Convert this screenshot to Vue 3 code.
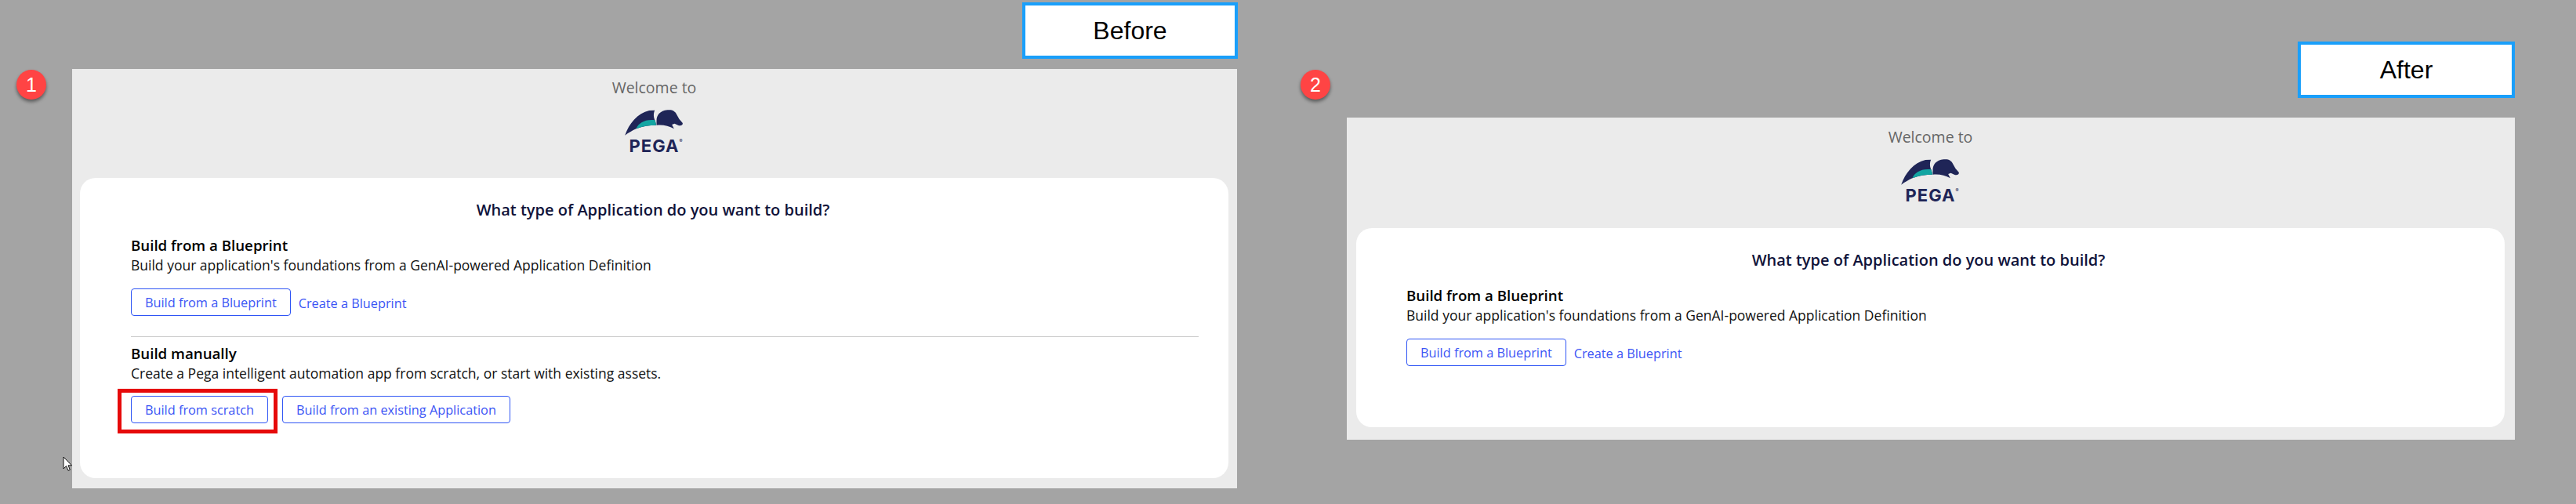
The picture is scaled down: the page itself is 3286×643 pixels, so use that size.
<script setup>
const panels = [
  { id: 'before', manual: true },
  { id: 'after', manual: false },
]
</script>

<template>
  <div class="page">
    <section v-for="p in panels" :key="p.id" class="panel" :class="p.id">
      <header class="head">
        <div class="welcome">Welcome to</div>
        <div class="logo">
          <svg class="mark" viewBox="112 59 224 99" aria-hidden="true">
            <path fill="#1f2557" d="M112 157C128 112 160 72 205 62L226 61C220 75 222 90 228 101L232 118C205 118 180 122 155 132C140 139 125 148 112 157Z" />
            <path fill="#12a5a2" d="M155 132C163 110 190 94 227 99L232 118C205 118 178 122 155 132Z" />
            <path fill="#1f2557" d="M233 101C233 80 246 63 275 60C284 59 293 60 299 64L306 70L320 95L333 110C335 118 325 122 315 118L302 112L292 116L300 132C280 120 255 115 233 118Z" />
          </svg>
          <div class="word">PEGA<sup>®</sup></div>
        </div>
      </header>
      <main class="card">
        <h1 class="title">What type of Application do you want to build?</h1>
        <div class="group">
          <h2>Build from a Blueprint</h2>
          <p>Build your application's foundations from a GenAI-powered Application Definition</p>
          <div class="actions">
            <button class="btn">Build from a Blueprint</button>
            <a class="link">Create a Blueprint</a>
          </div>
        </div>
        <template v-if="p.manual">
          <hr class="rule" />
          <div class="group">
            <h2>Build manually</h2>
            <p>Create a Pega intelligent automation app from scratch, or start with existing assets.</p>
            <div class="actions wide">
              <button class="btn">Build from scratch</button>
              <button class="btn">Build from an existing Application</button>
            </div>
          </div>
        </template>
      </main>
    </section>

    <div class="tag tag-before">Before</div>
    <div class="tag tag-after">After</div>
    <div class="badge badge-1">1</div>
    <div class="badge badge-2">2</div>
    <div class="highlight"></div>
    <svg class="cursor" viewBox="0 0 12 20" width="12" height="20" aria-hidden="true">
      <path d="M1 1V16L4.6 12.6L7 18.4L9.4 17.4L7 11.8H11.5Z" fill="#fff" stroke="#111" stroke-width="1" />
    </svg>
  </div>
</template>

<style scoped>
.page {
  position: relative;
  width: 3286px;
  height: 643px;
  background: #a4a4a4;
  overflow: hidden;
  display: flex;
  align-items: flex-start;
  padding-left: 92px;
  box-sizing: border-box;
  font-family: "Open Sans", "Liberation Sans", sans-serif;
}
.panel {
  background: #ebebeb;
  box-sizing: border-box;
  display: flex;
  flex-direction: column;
}
.before {
  width: 1486px;
  height: 535px;
  margin-top: 88px;
  padding: 0 11px 13px 10px;
}
.after {
  width: 1490px;
  height: 411px;
  margin-top: 150px;
  margin-left: 140px;
  padding: 0 13px 16px 12px;
}
.head {
  height: 139px;
  flex: none;
  display: flex;
  flex-direction: column;
  align-items: center;
  padding-top: 12px;
  box-sizing: border-box;
}
.after .head {
  height: 141px;
  padding-top: 13px;
}
.welcome {
  font-size: 19.5px;
  line-height: 24px;
  color: #666;
}
.logo {
  margin-top: 16px;
  display: flex;
  flex-direction: column;
  align-items: center;
  width: 75px;
}
.mark {
  display: block;
  width: 75px;
  height: 33px;
}
.word {
  margin-top: 1px;
  font-family: "Inter", "Open Sans", sans-serif;
  font-size: 22px;
  line-height: 24px;
  font-weight: 700;
  letter-spacing: 1px;
  color: #1f2557;
  position: relative;
}
.word sup {
  position: absolute;
  font-size: 6px;
  line-height: 6px;
  font-weight: 400;
  top: 3px;
}
.card {
  flex: 1;
  background: #fff;
  border-radius: 20px;
  padding: 27px 38px 0 65px;
}
.after .card {
  padding-left: 64px;
  padding-right: 39px;
}
.title {
  margin: 0 30px 20px 0;
  font-size: 20px;
  line-height: 27px;
  font-weight: 600;
  color: #10133a;
  text-align: center;
}
h2 {
  margin: 0;
  font-size: 18.7px;
  line-height: 24px;
  font-weight: 600;
  color: #000;
}
p {
  margin: 1px 0 0;
  font-size: 17.5px;
  line-height: 24px;
  color: #111;
}
.actions {
  margin-top: 18px;
  display: flex;
  align-items: center;
  gap: 10px;
}
.actions.wide {
  gap: 18px;
  margin-top: 17px;
}
.btn {
  height: 35px;
  padding: 0 17px;
  background: #fff;
  border: 1px solid #2f55f5;
  border-radius: 4px;
  color: #3b55f5;
  font-family: inherit;
  font-size: 16.3px;
  line-height: 22px;
}
.link {
  color: #3b55f5;
  font-size: 16.3px;
  line-height: 22px;
  padding-top: 3px;
}
.rule {
  margin: 26px 0 9px;
  border: 0;
  border-top: 1px solid #ccc;
}
.tag {
  position: absolute;
  box-sizing: border-box;
  border: 4px solid #1a9ffa;
  background: #fff;
  color: #000;
  font-family: "Liberation Sans", Arial, sans-serif;
  font-size: 32px;
  display: flex;
  align-items: center;
  justify-content: center;
}
.tag-before {
  left: 1304px;
  top: 3px;
  width: 275px;
  height: 72px;
}
.tag-after {
  left: 2931px;
  top: 53px;
  width: 277px;
  height: 72px;
}
.badge {
  position: absolute;
  top: 89px;
  width: 38px;
  height: 38px;
  border-radius: 50%;
  background: #ff4444;
  box-shadow: 0 3px 4px rgba(0, 0, 0, 0.45);
  color: #fff;
  font-family: "Liberation Sans", Arial, sans-serif;
  font-size: 25px;
  display: flex;
  align-items: center;
  justify-content: center;
}
.badge-1 { left: 21px; }
.badge-2 { left: 1659px; }
.highlight {
  position: absolute;
  left: 150px;
  top: 496px;
  width: 204px;
  height: 57px;
  box-sizing: border-box;
  border: 5px solid #e60a0a;
}
.cursor {
  position: absolute;
  left: 80px;
  top: 582px;
}
</style>

<style>
html, body { margin: 0; background: #a4a4a4; }
</style>
